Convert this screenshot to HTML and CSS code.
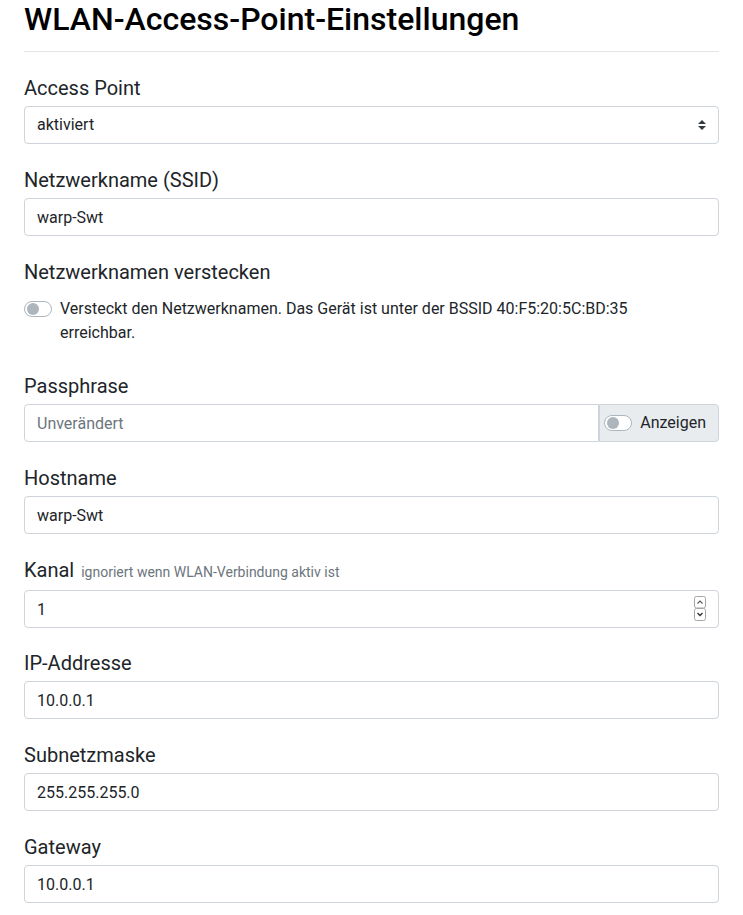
FILE: index.html
```html
<!DOCTYPE html>
<html lang="de">
<head>
<meta charset="utf-8">
<title>WLAN-Access-Point-Einstellungen</title>
<link rel="stylesheet" href="styles.css">
</head>
<body>
<main class="page">
  <h1 class="title">WLAN-Access-Point-Einstellungen</h1>
  <hr class="rule">

  <div class="group">
    <label class="label" for="ap">Access Point</label>
    <div class="wrap">
      <select class="control select" id="ap"><option>aktiviert</option><option>deaktiviert</option></select>
      <svg class="select-arrow" viewBox="0 0 4 5" width="8" height="10" aria-hidden="true"><path fill="#343a40" d="M2 0L0 2h4zm0 5L0 3h4z"/></svg>
    </div>
  </div>

  <div class="group">
    <label class="label" for="ssid">Netzwerkname (SSID)</label>
    <input class="control" id="ssid" type="text" value="warp-Swt">
  </div>

  <div class="group group-check">
    <label class="label">Netzwerknamen verstecken</label>
    <label class="check-row">
      <span class="switch"><span class="knob"></span></span>
      <span class="check-text">Versteckt den Netzwerknamen. Das Gerät ist unter der BSSID 40:F5:20:5C:BD:35 erreichbar.</span>
    </label>
  </div>

  <div class="group">
    <label class="label" for="pass">Passphrase</label>
    <div class="input-group">
      <input class="control control-grow" id="pass" type="password" placeholder="Unverändert">
      <label class="append">
        <span class="switch"><span class="knob"></span></span>
        <span>Anzeigen</span>
      </label>
    </div>
  </div>

  <div class="group">
    <label class="label" for="host">Hostname</label>
    <input class="control" id="host" type="text" value="warp-Swt">
  </div>

  <div class="group group-tight">
    <label class="label" for="chan">Kanal <span class="muted">ignoriert wenn WLAN-Verbindung aktiv ist</span></label>
    <div class="wrap">
      <input class="control number" id="chan" type="number" min="1" max="13" value="1">
      <svg class="spinner" viewBox="0 0 12 25" width="12" height="25" aria-hidden="true">
        <rect x="0.5" y="0.5" width="11" height="11.5" rx="2" fill="#fff" stroke="#a5a5a5"/>
        <rect x="0.5" y="12.5" width="11" height="12" rx="2" fill="#fff" stroke="#a5a5a5"/>
        <path d="M3.5 7.5L6 5l2.5 2.5" fill="none" stroke="#555" stroke-width="1.1"/>
        <path d="M3.5 17L6 19.5 8.5 17" fill="none" stroke="#333" stroke-width="1.4"/>
      </svg>
    </div>
  </div>

  <div class="group">
    <label class="label" for="ip">IP-Addresse</label>
    <input class="control" id="ip" type="text" value="10.0.0.1">
  </div>

  <div class="group">
    <label class="label" for="mask">Subnetzmaske</label>
    <input class="control" id="mask" type="text" value="255.255.255.0">
  </div>

  <div class="group">
    <label class="label" for="gw">Gateway</label>
    <input class="control" id="gw" type="text" value="10.0.0.1">
  </div>
</main>
</body>
</html>
```

FILE: styles.css
```css
* { box-sizing: border-box; }

html, body {
  margin: 0;
  background: #fff;
}

body {
  font-family: Roboto, "Liberation Sans", Arial, sans-serif;
  font-size: 16px;
  line-height: 1.5;
  color: #212529;
}

.page {
  padding: 0 24px 24px;
}

.title {
  margin: 0 0 13px;
  font-size: 32px;
  font-weight: 500;
  line-height: 38px;
  color: #000;
}

.rule {
  margin: 0 0 23px;
  border: 0;
  border-top: 1px solid #e5e5e5;
  height: 0;
}

.group {
  margin-bottom: 23px;
}

.group-tight {
  margin-bottom: 22px;
}

.label {
  display: block;
  font-size: 20px;
  line-height: 24px;
  padding-top: 1px;
  margin-bottom: 6px;
}

.muted {
  font-size: 14px;
  color: #6c757d;
  margin-left: 2px;
}

.control {
  display: block;
  width: 100%;
  height: 38px;
  padding: 6px 12px;
  font-family: inherit;
  font-size: 16px;
  line-height: 24px;
  color: #212529;
  background: #fff;
  border: 1px solid #ced4da;
  border-radius: 4px;
  outline: none;
}

.control::placeholder {
  color: #6c757d;
  opacity: 1;
}

.wrap {
  position: relative;
}

.select {
  appearance: none;
  -webkit-appearance: none;
  padding-right: 32px;
}

.select-arrow {
  position: absolute;
  right: 13px;
  top: 14px;
  pointer-events: none;
}

.number {
  -moz-appearance: textfield;
  padding-right: 32px;
}

.number::-webkit-inner-spin-button,
.number::-webkit-outer-spin-button {
  -webkit-appearance: none;
  margin: 0;
}

.spinner {
  position: absolute;
  right: 13px;
  top: 6px;
  pointer-events: none;
}

.group-check {
  padding-bottom: 5px;
}

.check-row {
  display: flex;
  align-items: flex-start;
  margin-top: 13px;
  font-size: 16px;
  line-height: 24px;
}

.switch {
  position: relative;
  flex: none;
  width: 28px;
  height: 16px;
  margin-top: 4px;
  border: 1px solid #adb5bd;
  border-radius: 8px;
  background: #fff;
}

.knob {
  position: absolute;
  left: 2px;
  top: 1px;
  width: 12px;
  height: 12px;
  border-radius: 50%;
  background: #adb5bd;
}

.check-text {
  margin-left: 8px;
  padding-right: 70px;
}

.input-group {
  display: flex;
}

.control-grow {
  flex: 1;
  min-width: 0;
  border-top-right-radius: 0;
  border-bottom-right-radius: 0;
}

.append {
  display: flex;
  align-items: center;
  gap: 8px;
  height: 38px;
  padding: 0 12px 0 4px;
  font-size: 16px;
  background: #e9ecef;
  border: 1px solid #ced4da;
  border-radius: 0 4px 4px 0;
}

.append .switch {
  margin-top: 0;
}
```
